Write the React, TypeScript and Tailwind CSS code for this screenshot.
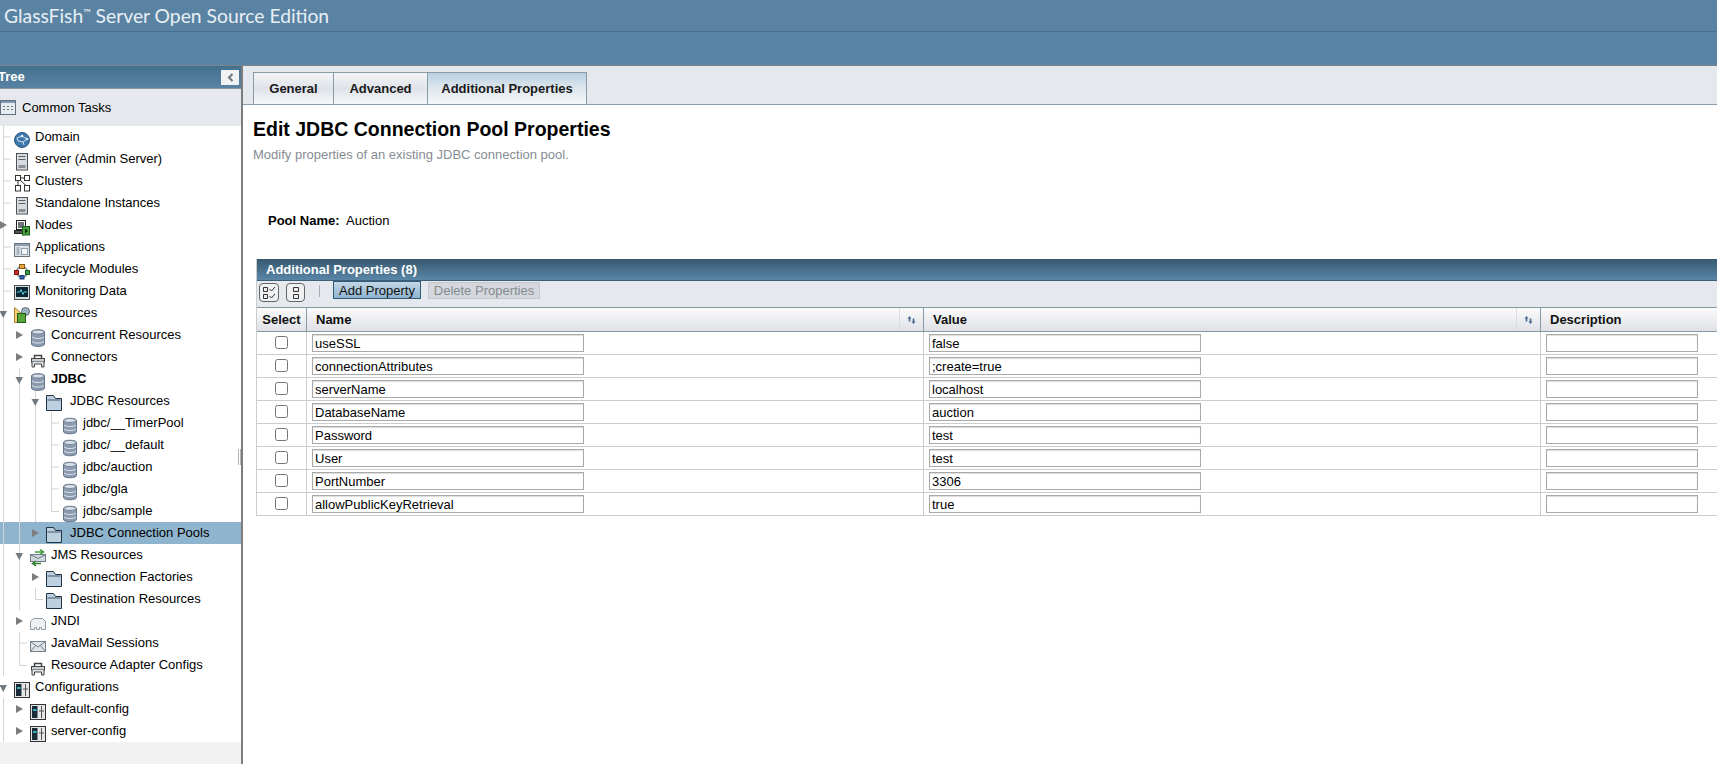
import { FC, ReactNode } from "react";

const font = "font-['Liberation_Sans',Arial,sans-serif]";

const Svg: FC<{ children: ReactNode }> = ({ children }) => (
    <svg width="16" height="18" viewBox="0 0 16 18" className="shrink-0">{children}</svg>
);

const Db: FC<{ small?: boolean }> = ({ small }) => (
    <Svg>
        <path
            d={small ? "M1.500 3.500c0-3 13-3 13 0v11c0 3-13 3-13 0z" : "M1.500 3c0-3 13-3 13 0v12c0 3.200-13 3.200-13 0z"}
            fill="#8b9bb0"
            stroke="#66768a"
        />
        <ellipse cx="8" cy={small ? 3.5 : 3} rx="6" ry="2" fill="#d9e0e7" stroke="#77869a" />
        <path
            d={small ? "M2 8c2 2 10 2 12 0M2 12c2 2 10 2 12 0" : "M2 8c2 2 10 2 12 0M2 12.500c2 2 10 2 12 0"}
            fill="none"
            stroke="#dde3ea"
        />
    </Svg>
);
const Folder = () => (
    <Svg>
        <path d="M0.500 15.500V0.500h7l2 3h6v12z" fill="#bdd0df" stroke="#1f3345" />
        <path d="M1.500 5h13" stroke="#44596c" />
    </Svg>
);
const Server = () => (
    <Svg>
        <rect x="2.500" y="0.500" width="11" height="16.500" fill="#d8dcdf" stroke="#4c5157" />
        <rect x="4.500" y="3" width="7" height="1" fill="#5a6066" />
        <rect x="4.500" y="6" width="7" height="1" fill="#5a6066" />
        <rect x="4.500" y="12" width="7" height="3" fill="#8a9097" />
    </Svg>
);
const Globe = () => (
    <Svg>
        <circle cx="8" cy="9" r="7.500" fill="#3f78ad" stroke="#2b5680" />
        <path d="M3 7l5-2 5 3-4 3-5-1zM9 11l1 3" stroke="#cfe0ee" fill="none" />
        <circle cx="8" cy="5" r="1.300" fill="#dfeaf3" />
        <circle cx="13" cy="8" r="1.300" fill="#dfeaf3" />
    </Svg>
);
const Cluster = () => (
    <Svg>
        <rect x="1.500" y="0.500" width="5" height="5" fill="#fff" stroke="#333" />
        <rect x="10.500" y="0.500" width="5" height="5" fill="#fff" stroke="#333" />
        <rect x="1.500" y="10.500" width="5" height="5.500" fill="#fff" stroke="#333" />
        <rect x="10.500" y="10.500" width="5" height="5.500" fill="#fff" stroke="#333" />
        <path d="M6.500 3h4M4 5.500v5M6 5l6 5.500" stroke="#333" fill="none" />
    </Svg>
);
const Nodes = () => (
    <Svg>
        <rect x="2.500" y="1.500" width="9" height="9" fill="#fff" stroke="#222" />
        <rect x="4" y="3" width="6" height="6" fill="#6d7379" />
        <rect x="0.500" y="11.500" width="11" height="3" fill="#555" stroke="#222" />
        <rect x="8.500" y="7.500" width="7" height="8.500" fill="#47a13f" stroke="#1c5a18" />
        <path d="M11 9.500l3 2.500-3 2.500z" fill="#0c2a0c" />
    </Svg>
);
const Apps = () => (
    <Svg>
        <rect x="0.500" y="2.500" width="15" height="13" fill="#dbe3ea" stroke="#67727c" />
        <rect x="1" y="3" width="14" height="2" fill="#8fa0ae" />
        <path d="M2.500 7h3M2.500 9h3M2.500 11h3M2.500 13h3" stroke="#7c8a96" />
        <rect x="7.500" y="7.500" width="6" height="6" fill="#f4f6f8" stroke="#93a0ab" />
    </Svg>
);
const Lifecycle = () => (
    <Svg>
        <circle cx="8" cy="9" r="5.500" fill="none" stroke="#8a949c" strokeWidth="1.500" />
        <rect x="5.500" y="1.500" width="5" height="4" fill="#e8a33a" stroke="#8a5a10" />
        <rect x="0.500" y="7.500" width="4" height="4" fill="#c9302c" stroke="#7a1512" />
        <rect x="11.500" y="7.500" width="4" height="4" fill="#3d9a44" stroke="#1d5a22" />
        <rect x="6" y="12.500" width="4" height="3.500" fill="#3768b0" stroke="#1c3c72" />
    </Svg>
);
const Monitor = () => (
    <Svg>
        <rect x="0.500" y="0.500" width="15" height="14" fill="#d8dcdf" stroke="#4b5054" />
        <rect x="2" y="2" width="12" height="10" fill="#062733" />
        <path d="M3 7h3l1-2.500 2 5 1-2.500h3" stroke="#58d0d8" fill="none" />
    </Svg>
);
const Resources = () => (
    <Svg>
        <path d="M0.500 0.500l7 6v9h-7z" fill="#f3cf7a" stroke="#b0802a" />
        <circle cx="11.500" cy="4.500" r="4" fill="#9fb2c2" stroke="#5c6c7c" />
        <rect x="3.500" y="6.500" width="8" height="9" fill="#5aa63a" stroke="#1f5c14" />
    </Svg>
);
const Connector = () => (
    <Svg>
        <path d="M4.500 7.500V4.500h7v3" fill="none" stroke="#444" strokeWidth="1.500" />
        <rect x="1.500" y="7.500" width="13" height="3.500" fill="#c8ced3" stroke="#444" />
        <path d="M2 11v5h2.500v-3h7v3H14v-5" fill="#dfe3e6" stroke="#444" />
    </Svg>
);
const Jms = () => (
    <Svg>
        <rect x="0.500" y="5.500" width="15" height="7" fill="#cfd8df" stroke="#6f7c87" />
        <path d="M1 6l7 3.500L15 6" stroke="#6f7c87" fill="none" />
        <path d="M5 3h7M10 0.500L13.500 3 10 5.500" stroke="#3c9a3a" strokeWidth="1.500" fill="none" />
        <path d="M11 14.500H3M6 12L2.500 14.500 6 17" stroke="#2e7d2c" strokeWidth="1.500" fill="none" />
    </Svg>
);
const Jndi = () => (
    <Svg>
        <path d="M0.500 14.500V6.500l3-3h9l3 3v8h-4v-2h-2v2h-3v-2h-2v2z" fill="#eef1f3" stroke="#8f9aa3" />
    </Svg>
);
const Mail = () => (
    <Svg>
        <rect x="0.500" y="4.500" width="15" height="10" fill="#dfe5ea" stroke="#76838e" />
        <path d="M1 5l7 5 7-5M1 14l5-6M15 14l-5-6" stroke="#76838e" fill="none" />
    </Svg>
);
const Config = () => (
    <Svg>
        <rect x="0.500" y="1.500" width="15" height="15" fill="#e4e7e9" stroke="#333" />
        <rect x="2" y="3" width="5.500" height="12" fill="#1c2c36" />
        <rect x="3" y="6" width="3.500" height="2" fill="#35b0b8" />
        <path d="M11.500 3v12M9 8h5" stroke="#555" fill="none" />
    </Svg>
);
const Tasks = () => (
    <svg width="16" height="15" viewBox="0 0 16 15" className="shrink-0">
        <rect x="0.500" y="0.500" width="15" height="14" fill="#e8edf1" stroke="#5f7180" />
        <rect x="1" y="1" width="14" height="2" fill="#7f99ae" />
        <path d="M3 6h2v1H3zM7 6h2v1H7zM11 6h2v1h-2zM3 9h2v1H3zM7 9h2v1H7zM11 9h2v1h-2z" fill="#6a7b89" />
    </svg>
);

type Cell = "" | "line" | "tee" | "elbow" | "open" | "closed" | "openLine" | "closedLine";

// one 16x22 slot of the tree: guide lines and the expander triangle
const Slot: FC<{ cell: Cell }> = ({ cell }) => (
    <svg width="16" height="22" viewBox="0 0 16 22" className="shrink-0">
        {(cell === "line" || cell === "tee" || cell === "openLine" || cell === "closedLine") && (
            <path d="M8.500 0v22" stroke="#d4d4d4" />
        )}
        {cell === "tee" && <path d="M8.500 11H16" stroke="#d4d4d4" />}
        {cell === "elbow" && <path d="M8.500 0v11.500H16" stroke="#d4d4d4" fill="none" />}
        {(cell === "closed" || cell === "closedLine") && (
            <path d="M5 7l7 4-7 4z" fill="#7d7d7d" />
        )}
        {(cell === "open" || cell === "openLine") && (
            <path d="M4.500 9h7.500l-3.750 7z" fill="#6f7a82" />
        )}
    </svg>
);

type Node = { label: string; cells: Cell[]; icon: ReactNode; gap?: string; selected?: boolean; bold?: boolean };

const nodes: Node[] = [
    { label: "Domain", cells: ["tee"], icon: <Globe /> },
    { label: "server (Admin Server)", cells: ["tee"], icon: <Server /> },
    { label: "Clusters", cells: ["tee"], icon: <Cluster /> },
    { label: "Standalone Instances", cells: ["tee"], icon: <Server /> },
    { label: "Nodes", cells: ["closedLine"], icon: <Nodes /> },
    { label: "Applications", cells: ["tee"], icon: <Apps /> },
    { label: "Lifecycle Modules", cells: ["tee"], icon: <Lifecycle /> },
    { label: "Monitoring Data", cells: ["tee"], icon: <Monitor /> },
    { label: "Resources", cells: ["openLine"], icon: <Resources /> },
    { label: "Concurrent Resources", cells: ["line", "closed"], icon: <Db /> },
    { label: "Connectors", cells: ["line", "closed"], icon: <Connector /> },
    { label: "JDBC", cells: ["line", "openLine"], icon: <Db />, bold: true },
    { label: "JDBC Resources", cells: ["line", "line", "openLine"], icon: <Folder />, gap: "ml-2" },
    { label: "jdbc/__TimerPool", cells: ["line", "line", "line", "tee"], icon: <Db small /> },
    { label: "jdbc/__default", cells: ["line", "line", "line", "tee"], icon: <Db small /> },
    { label: "jdbc/auction", cells: ["line", "line", "line", "tee"], icon: <Db small /> },
    { label: "jdbc/gla", cells: ["line", "line", "line", "tee"], icon: <Db small /> },
    { label: "jdbc/sample", cells: ["line", "line", "line", "elbow"], icon: <Db small /> },
    { label: "JDBC Connection Pools", cells: ["line", "line", "closed"], icon: <Folder />, gap: "ml-2", selected: true },
    { label: "JMS Resources", cells: ["line", "openLine"], icon: <Jms /> },
    { label: "Connection Factories", cells: ["line", "line", "closed"], icon: <Folder />, gap: "ml-2" },
    { label: "Destination Resources", cells: ["line", "line", "elbow"], icon: <Folder />, gap: "ml-2" },
    { label: "JNDI", cells: ["line", "closed"], icon: <Jndi /> },
    { label: "JavaMail Sessions", cells: ["line", "tee"], icon: <Mail /> },
    { label: "Resource Adapter Configs", cells: ["line", "elbow"], icon: <Connector /> },
    { label: "Configurations", cells: ["open"], icon: <Config /> },
    { label: "default-config", cells: ["line", "closed"], icon: <Config /> },
    { label: "server-config", cells: ["line", "closed"], icon: <Config /> },
];

const TreeRow: FC<{ node: Node }> = ({ node }) => (
    <div className={`flex items-center h-[22px] -ml-[5px] ${node.selected ? "bg-[#8fb4cd]" : ""}`}>
        {node.cells.map((c, i) => (
            <Slot key={i} cell={c} />
        ))}
        <div className="ml-[3px] shrink-0 translate-y-[3px]">{node.icon}</div>
        <span className={`${node.gap ?? "ml-[5px]"} whitespace-nowrap text-[13px] text-black ${node.bold ? "font-bold" : ""}`}>
            {node.label}
        </span>
    </div>
);

const Sort = () => (
    <svg width="9" height="8" viewBox="0 0 9 8">
        <path d="M2.500 0L4.500 2.500H3.300v3H1.700v-3H0.500zM6.500 8L4.500 5.500H5.700v-3h1.600v3H8.500z" fill="#44688f" />
    </svg>
);

const props = [
    ["useSSL", "false"],
    ["connectionAttributes", ";create=true"],
    ["serverName", "localhost"],
    ["DatabaseName", "auction"],
    ["Password", "test"],
    ["User", "test"],
    ["PortNumber", "3306"],
    ["allowPublicKeyRetrieval", "true"],
];

const Field: FC<{ value: string; width: string }> = ({ value, width }) => (
    <input
        type="text"
        defaultValue={value}
        className={`${width} h-[18px] border border-[#a9a9a9] bg-white px-[2px] pt-[2px] pb-0 text-[13px] text-black outline-none shadow-[inset_0_1px_1px_#ddd]`}
    />
);

const App: FC = () => {
    return (
        <div className={`${font} w-[1717px] h-[764px] overflow-hidden flex flex-col bg-white`}>
            <div className="h-[32px] shrink-0 bg-[#5a83a3] border-b border-[#44708f] pl-1 flex items-center">
                <span className="font-['Lato',sans-serif] text-[19.3px] text-[#e8eff4] whitespace-nowrap translate-y-[1px]">
                    GlassFish<span className="text-[10px] align-[7px]">™</span> Server Open Source Edition
                </span>
            </div>
            <div className="h-[34px] shrink-0 bg-[#5a84a5] border-b border-[#7d8488]"></div>

            <div className="flex flex-1 min-h-0">
                <div className="relative w-[243px] shrink-0 flex flex-col overflow-hidden border-r-2 border-[#7d7d7d] bg-white">
                    <div className="h-[23px] shrink-0 flex items-center justify-between bg-gradient-to-b from-[#44708f] to-[#5a83a3] border-b border-[#8a98a2] pr-[2px]">
                        <span className="-ml-[2px] text-[13px] font-bold text-white">Tree</span>
                        <button className="w-[18px] h-[15px] bg-[#f0f2f4] flex items-center justify-center">
                            <svg width="7" height="9" viewBox="0 0 7 9">
                                <path d="M5.500 1L2 4.500 5.500 8" stroke="#6d7680" strokeWidth="2" fill="none" />
                            </svg>
                        </button>
                    </div>
                    <div className="h-[37px] shrink-0 flex items-center bg-[#e5e8ec]">
                        <Tasks />
                        <span className="ml-[6px] text-[13px] text-black">Common Tasks</span>
                    </div>
                    <div className="flex-1 min-h-0 flex flex-col">
                        {nodes.map((n) => (
                            <TreeRow key={n.label} node={n} />
                        ))}
                        <div className="flex-1 bg-[#f2f2f2]"></div>
                    </div>
                    <div className="absolute right-0 top-[383px] w-[3px] h-[16px] border-x border-[#b5b5b5]"></div>
                </div>

                <div className="flex-1 min-w-0 flex flex-col">
                    <div className="h-[39px] shrink-0 bg-[#e5e8ec] border-b border-[#8a9ba8] pl-[10px] pt-[6px] flex items-end">
                        <div className="flex h-[33px] -mb-px text-[13px] font-bold text-[#1a1a1a]">
                            <div className="w-[81px] flex items-center justify-center border border-[#8a9ba8] bg-gradient-to-b from-[#f4f5f7] via-[#dfe3e9] to-[#f6f7f9]">General</div>
                            <div className="w-[94px] flex items-center justify-center border border-l-0 border-[#8a9ba8] bg-gradient-to-b from-[#f4f5f7] via-[#dfe3e9] to-[#f6f7f9]">Advanced</div>
                            <div className="w-[159px] flex items-center justify-center border border-l-0 border-[#8a9ba8] bg-gradient-to-b from-[#b9d0e1] via-[#dfe7ee] to-[#f4f7f9]">Additional Properties</div>
                        </div>
                    </div>

                    <div className="pl-[10px] pt-[12px]">
                        <h1 className="text-[19.5px] leading-[24px] font-bold text-black">Edit JDBC Connection Pool Properties</h1>
                        <p className="mt-[6px] text-[13px] leading-[15px] text-[#868c93]">Modify properties of an existing JDBC connection pool.</p>
                    </div>

                    <div className="pl-[25px] mt-[51px] flex items-center h-[16px] text-[13px] text-black">
                        <span className="font-bold w-[78px]">Pool Name:</span>
                        <span>Auction</span>
                    </div>

                    <div className="ml-[13px] mt-[30px] border-l border-[#cccccc]">
                        <div className="h-[22px] bg-gradient-to-b from-[#385970] to-[#5a86a7] border-b border-[#3d5f78] flex items-center pl-[9px] text-[13px] font-bold text-white">
                            Additional Properties (8)
                        </div>
                        <div className="h-[26px] bg-[#e5e8ec] flex items-start pl-[2px]">
                            <button className="mt-[2px] w-[20px] h-[19px] border border-[#666] rounded-[4px] flex items-center justify-center bg-[#eef0f2]">
                                <svg width="14" height="13" viewBox="0 0 14 13">
                                    <path d="M1.500 1.500h4v4h-4zM1.500 8.500h4v4h-4z" fill="none" stroke="#333" />
                                    <path d="M7.500 3l2 2 3.500-4M7.500 10l2 2 3.500-4" fill="none" stroke="#333" />
                                </svg>
                            </button>
                            <button className="mt-[2px] ml-[7px] w-[19px] h-[19px] border border-[#666] rounded-[4px] flex items-center justify-center bg-[#eef0f2]">
                                <svg width="8" height="13" viewBox="0 0 8 13">
                                    <path d="M1.500 1.500h5v4h-5zM1.500 8.500h5v4h-5z" fill="none" stroke="#333" />
                                </svg>
                            </button>
                            <div className="ml-[14px] mt-[4px] w-px h-[12px] bg-[#a9aeb2]"></div>
                            <button className="ml-[13px] w-[88px] h-[18px] border border-[#2f5a7c] bg-gradient-to-b from-[#c3d7e5] to-[#8fb4ce] text-[13px] leading-none text-[#111]">Add Property</button>
                            <button className="ml-[7px] mt-[1px] w-[112px] h-[17px] border border-[#c4c8cb] bg-[#d4d8dc] text-[13px] leading-none text-[#868c93]">Delete Properties</button>
                        </div>
                        <div className="grid grid-cols-[50px_617px_617px_1fr] h-[25px] border-y border-[#8498a6] bg-gradient-to-b from-[#fbfbfc] to-[#dfe1e5] text-[13px] font-bold text-[#111]">
                            <div className="flex items-center justify-center border-r border-[#8498a6]">Select</div>
                            <div className="flex items-center justify-between border-r border-[#8498a6] pl-[9px]">
                                <span>Name</span>
                                <div className="w-[24px] h-full flex items-center justify-center border-l border-[#dcdfe2]"><Sort /></div>
                            </div>
                            <div className="flex items-center justify-between border-r border-[#8498a6] pl-[9px]">
                                <span>Value</span>
                                <div className="w-[24px] h-full flex items-center justify-center border-l border-[#dcdfe2]"><Sort /></div>
                            </div>
                            <div className="flex items-center pl-[9px]">Description</div>
                        </div>
                        {props.map(([name, value]) => (
                            <div key={name} className="grid grid-cols-[50px_617px_617px_1fr] h-[23px] border-b border-[#cccccc]">
                                <div className="flex items-center justify-center border-r border-[#cccccc]">
                                    <input type="checkbox" className="w-[13px] h-[13px] m-0 -mt-[1px]" />
                                </div>
                                <div className="flex items-center pl-[5px] border-r border-[#cccccc]">
                                    <Field value={name} width="w-[272px]" />
                                </div>
                                <div className="flex items-center pl-[5px] border-r border-[#cccccc]">
                                    <Field value={value} width="w-[272px]" />
                                </div>
                                <div className="flex items-center pl-[5px]">
                                    <Field value="" width="w-[152px]" />
                                </div>
                            </div>
                        ))}
                    </div>
                </div>
            </div>
        </div>
    );
};

export default App;
